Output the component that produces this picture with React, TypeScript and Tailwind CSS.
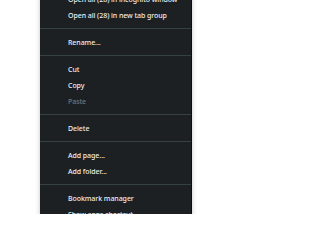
import React from "react";

type Item = { label: string; disabled?: boolean } | "sep";

const items: Item[] = [
  { label: "Open all (28) in incognito window" },
  { label: "Open all (28) in new tab group" },
  "sep",
  { label: "Rename..." },
  "sep",
  { label: "Cut" },
  { label: "Copy" },
  { label: "Paste", disabled: true },
  "sep",
  { label: "Delete" },
  "sep",
  { label: "Add page..." },
  { label: "Add folder..." },
  "sep",
  { label: "Bookmark manager" },
  { label: "Show apps shortcut" },
  { label: "Show tab groups" },
];

export default function App() {
  return (
    <div className="w-[320px] h-[214px] overflow-hidden bg-white relative">
      <div
        className="ml-[40px] w-[152px] -mt-[9px] bg-[#1c2023] border-r border-[#0b0d0e] shadow-[0_0_5px_rgba(0,0,0,0.22)] flex flex-col"
        style={{ fontFamily: '"Noto Sans", "Open Sans", sans-serif' }}
      >
        {items.map((it, i) =>
          it === "sep" ? (
            <div key={i} className="py-[5px]">
              <div className="h-px bg-[#364242]" />
            </div>
          ) : (
            <div
              key={i}
              className={`h-[16px] pl-[28px] pt-px flex items-center text-[7px] font-medium tracking-[-0.06px] leading-none whitespace-nowrap ${
                it.disabled ? "text-[#73787b]" : "text-[#eceef0]"
              }`}
            >
              {it.label}
            </div>
          )
        )}
      </div>
    </div>
  );
}
